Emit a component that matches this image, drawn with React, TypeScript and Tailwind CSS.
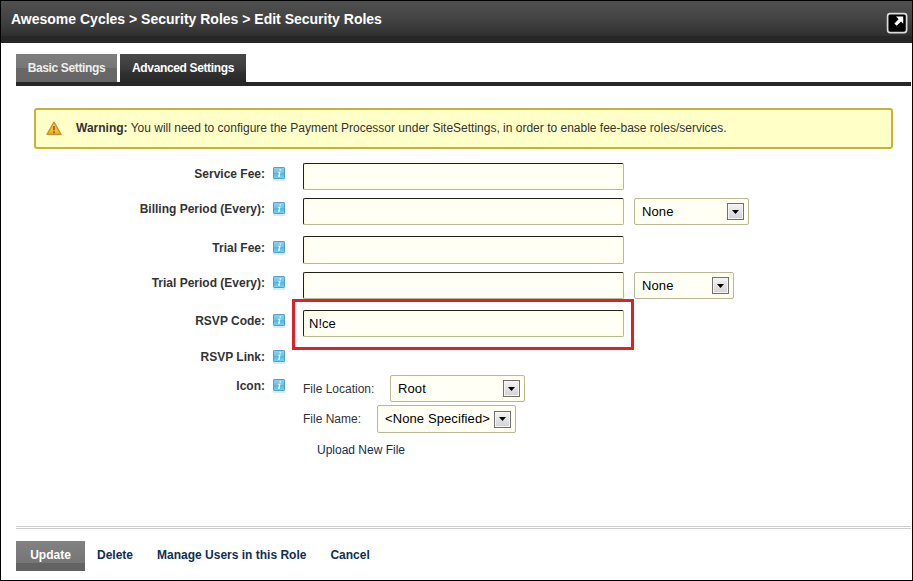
import type { ReactNode } from 'react';

function InfoIcon() {
  return (
    <svg width="14" height="16" viewBox="0 0 14 16" className="block shrink-0">
      <defs>
        <linearGradient id="info" x1="0" y1="0" x2="0" y2="1">
          <stop offset="0" stopColor="#8fd0ef" />
          <stop offset="0.5" stopColor="#6cc3ec" />
          <stop offset="0.55" stopColor="#4fb6e8" />
          <stop offset="1" stopColor="#7fd2f4" />
        </linearGradient>
      </defs>
      <rect x="1" y="13" width="12" height="2" fill="#e0eaee" />
      <rect x="1.5" y="1.5" width="11" height="11" rx="0.6" fill="url(#info)" stroke="#4fa0cc" />
      <path d="M7.5 3.9h1.5M6.3 6.3h1.5L6.8 10h1.2" stroke="#f2fbff" strokeWidth="1.3" fill="none" />
    </svg>
  );
}

function WarningIcon() {
  return (
    <svg width="16" height="15" viewBox="0 0 16 15" className="block shrink-0">
      <defs>
        <linearGradient id="warn" x1="0" y1="0" x2="0" y2="1">
          <stop offset="0" stopColor="#f4cf70" />
          <stop offset="1" stopColor="#f0b404" />
        </linearGradient>
      </defs>
      <path d="M8 1.2 15 13.3H1Z" fill="url(#warn)" stroke="#cc9236" strokeWidth="1.4" strokeLinejoin="round" />
      <path d="M8 5v4.3M8 10.3v1.9" stroke="#85581c" strokeWidth="1.5" />
    </svg>
  );
}

function PopOutIcon() {
  return (
    <svg width="22" height="22" viewBox="0 0 22 22" className="block">
      <rect x="1.6" y="1.6" width="19" height="19" rx="2.5" fill="#000" stroke="#dcdcdc" strokeWidth="1.7" />
      <path d="M10 4.500h7.200v7.200l-2.200-2.200-4.300 4.300-2.300-2.300 4.200-4.300Z" fill="#fff" />
    </svg>
  );
}

function Field({ value = '', className = 'h-[27px]' }: { value?: string; className?: string }) {
  return (
    <div
      className={`flex w-[321px] shrink-0 items-center rounded-[2px] border border-t-[#222218] border-r-[#b9b795] border-b-[#b9b795] border-l-[#222218] bg-[#fffff5] pl-[5px] text-[13px] text-black shadow-[inset_0_0_5px_#fffbd9] ${className}`}
    >
      {value}
    </div>
  );
}

function Select({ value, className }: { value: string; className: string }) {
  return (
    <div
      className={`flex shrink-0 items-center justify-between rounded-[2px] border border-[#b9b795] bg-[#fffff5] pr-1 pl-[7px] text-[13px] text-black shadow-[inset_0_0_4px_#fffde6] ${className}`}
    >
      <span className="tracking-[0.1px] whitespace-nowrap">{value}</span>
      <span className="flex h-[17px] w-[17px] shrink-0 items-center justify-center border border-[#70706f] bg-linear-to-b from-[#f4f4f4] to-[#d2d2d2] shadow-[inset_0_0_0_1px_#f5f5f5]">
        <svg width="7" height="4" viewBox="0 0 7 4" className="block">
          <path d="M0 0h7L3.5 4Z" fill="#000" />
        </svg>
      </span>
    </div>
  );
}

function Row({ label, height, offset = '', children }: { label: ReactNode; height: string; offset?: string; children?: ReactNode }) {
  return (
    <div className={`flex items-start ${height}`}>
      <div className={`flex w-[285px] shrink-0 items-start justify-end ${offset}`}>
        <span className="h-[22px] text-[12px] leading-[22px] font-bold whitespace-nowrap text-[#333]">{label}</span>
        <span className="ml-[7px] pt-[3px]">
          <InfoIcon />
        </span>
      </div>
      <div className="ml-[17px] flex">{children}</div>
    </div>
  );
}

export default function App() {
  return (
    <div className="flex h-[581px] w-[913px] flex-col overflow-hidden border border-black bg-white font-['Liberation_Sans',Arial,sans-serif] text-[12px]">
      <header className="flex h-[42px] shrink-0 items-start justify-between bg-[linear-gradient(#505050,#444_40%,#3b3b3b_60%,#303030_82%,#272727_83%)] pr-1 pl-[10px]">
        <h1 className="pt-[8px] text-[14px] leading-5 font-bold whitespace-nowrap text-white">
          Awesome Cycles &gt; Security Roles &gt; Edit Security Roles
        </h1>
        <div className="pt-[11px]">
          <PopOutIcon />
        </div>
      </header>

      <nav className="mt-[11px] mr-[1px] ml-[15px] flex h-8 shrink-0 gap-[3px] border-b-4 border-[#282828] font-bold tracking-[-0.36px] text-white">
        <span className="flex w-[101px] items-center justify-center bg-[linear-gradient(#7f7f7f,#777_50%,#686868_51%,#666)] whitespace-nowrap text-[#eee]">
          Basic Settings
        </span>
        <span className="flex w-[126px] items-center justify-center bg-[linear-gradient(#494949,#3c3c3c_50%,#2f2f2f_70%,#282828)] whitespace-nowrap">
          Advanced Settings
        </span>
      </nav>

      <div className="mt-[22px] mr-[19px] ml-[33px] flex h-[41px] shrink-0 items-center rounded-[3px] border-2 border-[#c7b13e] bg-[#ffffc8] pl-[10px] text-[#333]">
        <WarningIcon />
        <p className="-mt-[2px] ml-[14px] whitespace-nowrap">
          <b>Warning:</b> You will need to configure the Payment Processor under SiteSettings, in order to enable fee-base roles/services.
        </p>
      </div>

      <main className="mt-[14px] flex h-[363px] shrink-0 flex-col">
        <Row label="Service Fee:" height="h-[35px]">
          <Field />
        </Row>
        <Row label="Billing Period (Every):" height="h-[38px]">
          <Field />
          <Select value="None" className="ml-[10px] h-[27px] w-[115px]" />
        </Row>
        <Row label="Trial Fee:" height="h-[36px]" offset="pt-px">
          <Field className="h-[28px]" />
        </Row>
        <Row label="Trial Period (Every):" height="h-[38px]">
          <Field />
          <Select value="None" className="ml-[10px] h-[27px] w-[100px]" />
        </Row>
        <Row label="RSVP Code:" height="h-[36px]">
          <div className="relative">
            <Field value="N!ce" />
            <div className="absolute -top-[11px] -left-[11px] h-[51px] w-[342px] border-3 border-[#dc2128]" />
          </div>
        </Row>
        <Row label="RSVP Link:" height="h-[29px]" />
        <Row label="Icon:" height="h-[151px]">
          <div className="flex flex-col text-[#333]">
            <div className="flex h-[30px] items-start">
              <span className="w-[87px] pt-px leading-[27px]">File Location:</span>
              <Select value="Root" className="h-[27px] w-[135px]" />
            </div>
            <div className="flex h-[28px] items-start">
              <span className="w-[74px] pt-px leading-[27px]">File Name:</span>
              <Select value="<None Specified>" className="h-[28px] w-[139px]" />
            </div>
            <a className="mt-[7px] ml-[14px] leading-5 text-[#0f2f54]">Upload New File</a>
          </div>
        </Row>
      </main>

      <div className="mr-[1px] ml-[15px] h-[3px] shrink-0 border-y border-[#ccc]" />

      <footer className="mt-[12px] ml-[15px] flex h-[30px] shrink-0 items-center font-bold whitespace-nowrap text-[#0f2f54]">
        <button className="flex h-[30px] w-[69px] items-center justify-center bg-[linear-gradient(#828282,#757575_72%,#636363_74%)] pb-[2px] font-bold text-white">
          Update
        </button>
        <a className="-mt-[2px] ml-[12px]">Delete</a>
        <a className="-mt-[2px] ml-[24px]">Manage Users in this Role</a>
        <a className="-mt-[2px] ml-[24px]">Cancel</a>
      </footer>
    </div>
  );
}
